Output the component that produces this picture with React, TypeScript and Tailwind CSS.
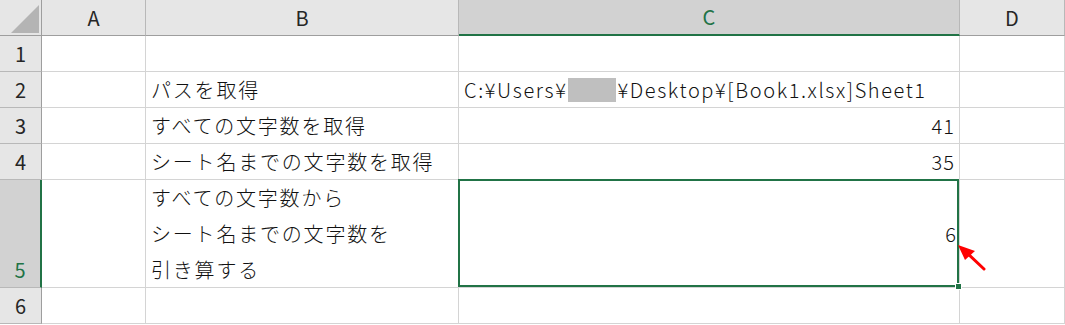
const jp = { fontFamily: '"Noto Sans CJK JP", "Noto Sans", sans-serif' };

const cols = ['A', 'B', 'C', 'D'];

const Corner = () => (
  <div className="relative h-[36px] border-r border-b border-[#9e9e9e] bg-[#e6e6e6]">
    <svg className="absolute left-[10px] top-[4px]" width="30" height="30" viewBox="0 0 30 30">
      <polygon points="29,1 29,29 1,29" fill="#b4b4b4" />
    </svg>
  </div>
);

const ColHeader = ({ name }: { name: string }) => {
  const active = name === 'C';
  return (
    <div
      className={
        active
          ? 'flex h-[36px] items-center justify-center border-r border-[#b8b8b8] border-b-2 border-b-[#217346] bg-[#d2d2d2] text-[20px] text-[#217346]'
          : 'flex h-[36px] items-center justify-center border-r border-b border-r-[#b8b8b8] border-b-[#9e9e9e] bg-[#e6e6e6] text-[20px] text-[#262626]'
      }
    >
      {name}
    </div>
  );
};

const RowHeader = ({ n, tall }: { n: number; tall?: boolean }) =>
  tall ? (
    <div className="flex items-end justify-center border-b border-b-[#b8b8b8] border-r-2 border-r-[#217346] bg-[#d2d2d2] pb-[2px] text-[20px] text-[#217346]">
      {n}
    </div>
  ) : (
    <div className="flex items-center justify-center border-r border-b border-r-[#9e9e9e] border-b-[#b8b8b8] bg-[#e6e6e6] text-[20px] text-[#262626]">
      {n}
    </div>
  );

const Cell = ({ children, right }: { children?: React.ReactNode; right?: boolean }) => (
  <div
    className={
      'flex items-center border-r border-b border-[#d4d4d4] text-[20px] font-light text-[#111] whitespace-nowrap ' +
      (right ? 'justify-end pr-[4px] tracking-[1px]' : 'pl-[5px]')
    }
  >
    {children}
  </div>
);

const Label = ({ children }: { children: React.ReactNode }) => (
  <span className="tracking-[1.8px]">{children}</span>
);

export default function App() {
  return (
    <div className="relative h-[325px] w-[1065px] overflow-hidden bg-white" style={jp}>
      <div className="grid grid-cols-[42px_104px_313px_501px_105px] grid-rows-[36px_36px_36px_36px_36px_108px_36px]">
        <Corner />
        {cols.map((c) => (
          <ColHeader key={c} name={c} />
        ))}

        <RowHeader n={1} />
        <Cell />
        <Cell />
        <Cell />
        <Cell />

        <RowHeader n={2} />
        <Cell />
        <Cell>
          <Label>パスを取得</Label>
        </Cell>
        <Cell>
          <span className="tracking-[1.6px]">C:¥Users¥</span>
          <span className="mx-[1px] inline-block h-[24px] w-[48px] bg-[#bfbfbf]" />
          <span className="tracking-[1.6px]">¥Desktop¥[Book1.xlsx]Sheet1</span>
        </Cell>
        <Cell />

        <RowHeader n={3} />
        <Cell />
        <Cell>
          <Label>すべての文字数を取得</Label>
        </Cell>
        <Cell right>41</Cell>
        <Cell />

        <RowHeader n={4} />
        <Cell />
        <Cell>
          <Label>シート名までの文字数を取得</Label>
        </Cell>
        <Cell right>35</Cell>
        <Cell />

        <RowHeader n={5} tall />
        <Cell />
        <div className="flex flex-col justify-center border-r border-b border-[#d4d4d4] pl-[5px] text-[20px] font-light leading-[36px] text-[#111]">
          <Label>すべての文字数から</Label>
          <Label>シート名までの文字数を</Label>
          <Label>引き算する</Label>
        </div>
        <div className="relative flex items-center justify-end border-r border-b border-[#d4d4d4] pr-[3px] text-[20px] font-light text-[#111]">
          6
          {/* active cell outline + fill handle */}
          <div className="absolute -left-px -top-px right-0 bottom-0 border-2 border-[#217346]">
            <div className="absolute -right-[5px] -bottom-[5px] h-[7px] w-[7px] border border-white bg-[#217346]" />
          </div>
        </div>
        <Cell />

        <RowHeader n={6} />
        <Cell />
        <Cell />
        <Cell />
        <Cell />
      </div>

      {/* red pointer arrow */}
      <svg className="pointer-events-none absolute left-0 top-0" width="1065" height="325">
        <line x1="984" y1="269" x2="966" y2="252" stroke="#ff0000" strokeWidth="3" strokeLinecap="round" />
        <polygon points="958,245 975,251 965,260" fill="#ff0000" />
      </svg>
    </div>
  );
}
